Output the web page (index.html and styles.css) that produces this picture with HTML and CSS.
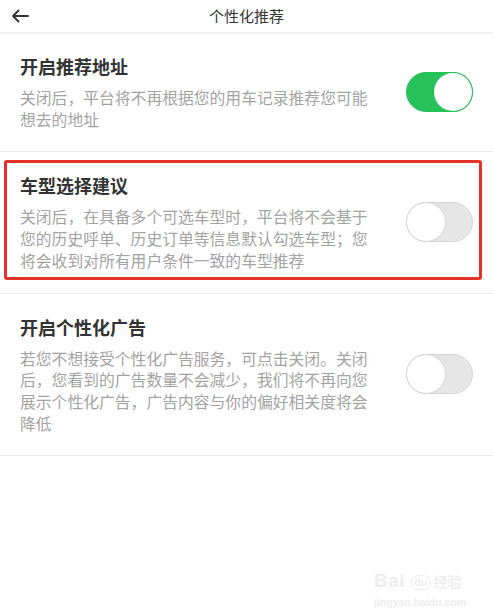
FILE: index.html
```html
<!DOCTYPE html>
<html lang="zh">
<head>
<meta charset="utf-8">
<title>个性化推荐</title>
<link rel="stylesheet" href="styles.css">
</head>
<body>
<header class="topbar">
  <svg class="back" width="18" height="14" viewBox="0 0 18 14"><path d="M17 7H2M7.5 1.5L2 7l5.5 5.5" fill="none" stroke="#333" stroke-width="1.8" stroke-linecap="round" stroke-linejoin="round"/></svg>
  <h1 class="title">个性化推荐</h1>
</header>
<main>
  <section class="item">
    <div class="text">
      <h2 class="name">开启推荐地址</h2>
      <p class="desc">关闭后，平台将不再根据您的用车记录推荐您可能想去的地址</p>
    </div>
    <span class="switch on"><span class="knob"></span></span>
  </section>
  <section class="item">
    <div class="text">
      <h2 class="name">车型选择建议</h2>
      <p class="desc">关闭后，在具备多个可选车型时，平台将不会基于您的历史呼单、历史订单等信息默认勾选车型；您将会收到对所有用户条件一致的车型推荐</p>
    </div>
    <span class="switch"><span class="knob"></span></span>
    <span class="redbox"></span>
  </section>
  <section class="item">
    <div class="text">
      <h2 class="name">开启个性化广告</h2>
      <p class="desc">若您不想接受个性化广告服务，可点击关闭。关闭后，您看到的广告数量不会减少，我们将不再向您展示个性化广告，广告内容与你的偏好相关度将会降低</p>
    </div>
    <span class="switch"><span class="knob"></span></span>
  </section>
</main>
<div class="watermark">
  <div class="wm-logo"><span class="wm-bai">Bai</span><span class="wm-du">du</span><span class="wm-jy">经验</span></div>
  <div class="wm-url">jingyan.baidu.com</div>
</div>
</body>
</html>
```
FILE: styles.css
```css
* { box-sizing: border-box; }
html, body { margin: 0; padding: 0; background: #fff; }
body {
  font-family: "Noto Sans CJK SC", "Noto Sans", sans-serif;
  color: #333;
  width: 493px;
  height: 616px;
  overflow: hidden;
  position: relative;
}
.topbar {
  height: 33px;
  display: flex;
  align-items: center;
  justify-content: center;
  position: relative;
  box-shadow: 0 1px 2px rgba(0,0,0,0.06);
  border-bottom: 1px solid #f0f0f0;
}
.back { position: absolute; left: 11px; top: 9px; }
.title {
  margin: 0;
  font-size: 15px;
  font-weight: 400;
  color: #333;
  line-height: 20px;
}
.item {
  position: relative;
  display: flex;
  align-items: center;
  justify-content: space-between;
  padding: 21px 20px 21px 20px;
  border-bottom: 1px solid #ececec;
}
.text { width: 356px; }
.name {
  margin: 0;
  font-size: 18px;
  line-height: 24px;
  font-weight: 700;
  color: #333;
}
.desc {
  margin: 9px 0 0;
  font-size: 15.8px;
  line-height: 21.7px;
  color: #a3a3a3;
}
.switch {
  width: 67px;
  height: 40px;
  border-radius: 20px;
  background: #e6e6e6;
  border: 1px solid #d6d6d6;
  position: relative;
  flex: none;
}
.switch .knob {
  position: absolute;
  top: 0;
  left: 0;
  width: 38px;
  height: 38px;
  border-radius: 50%;
  background: #fff;
  box-shadow: 0 0 0 1px #d8d8d8;
}
.switch.on {
  background: #27c15a;
  border-color: #27c15a;
}
.switch.on .knob {
  left: auto;
  right: 0;
  box-shadow: 0 0 0 1px #27c15a;
}
.redbox {
  position: absolute;
  left: 4px;
  right: 11px;
  top: 8px;
  bottom: 13px;
  border: 3px solid #e53228;
  border-radius: 3px;
  pointer-events: none;
}
.watermark {
  position: absolute;
  left: 374px;
  top: 572px;
  width: 92px;
  color: #eeeeee;
  font-family: "Liberation Sans", sans-serif;
}
.wm-logo {
  display: flex;
  align-items: flex-end;
  height: 18px;
  line-height: 18px;
}
.wm-bai { font-size: 19px; font-weight: 700; letter-spacing: 0.5px; }
.wm-du {
  font-size: 11px;
  font-weight: 700;
  margin: 0 3px 0 6px;
  padding: 0 2px;
  border: 1px solid #ececec;
  border-radius: 8px 8px 6px 6px;
  line-height: 13px;
}
.wm-jy { font-family: "Noto Sans CJK SC", sans-serif; font-size: 14px; font-weight: 700; }
.wm-url { font-size: 10.5px; line-height: 14px; font-weight: 700; margin-top: 5px; }
```
